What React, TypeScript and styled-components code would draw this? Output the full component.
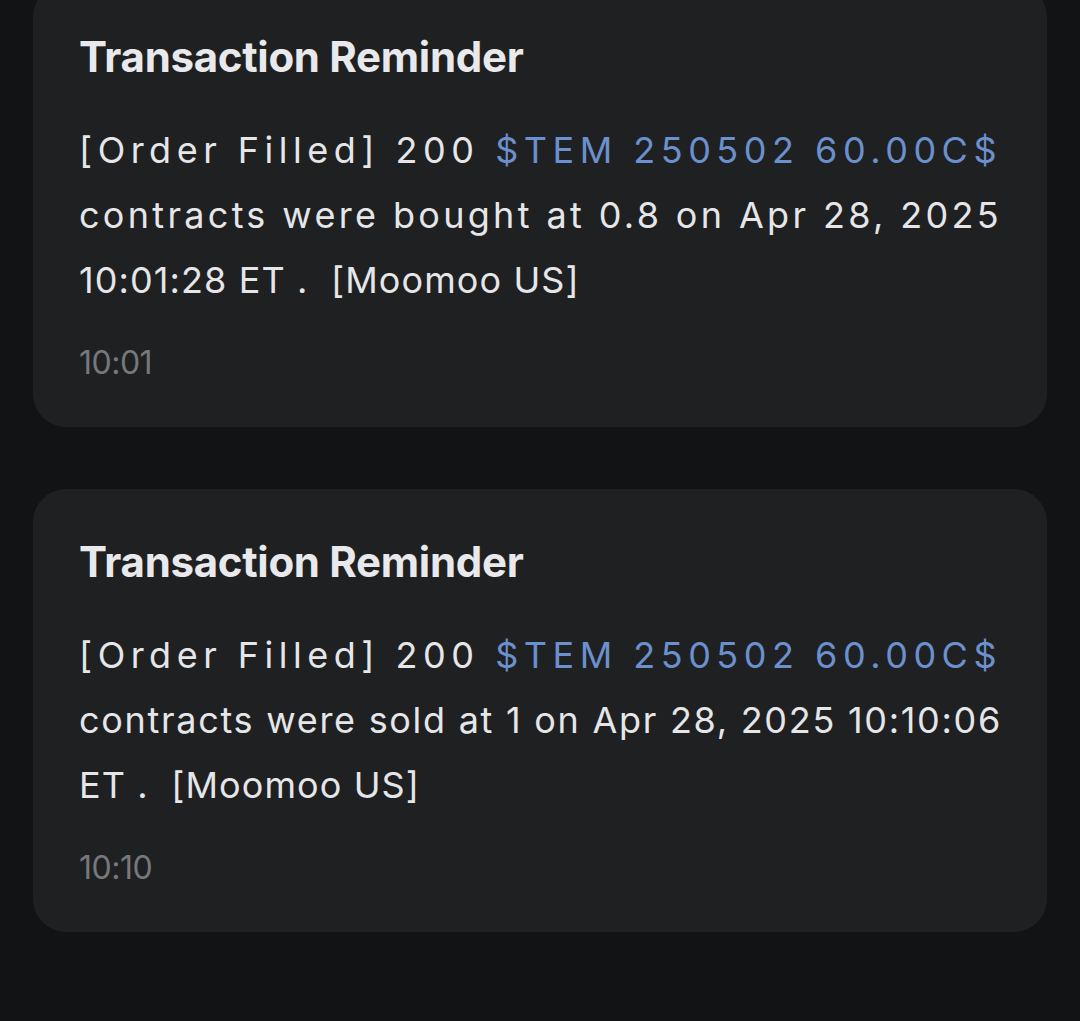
import * as React from 'react'
import styled, { createGlobalStyle } from 'styled-components'

const GlobalStyle = createGlobalStyle`
    html, body {
        margin: 0;
        padding: 0;
        background: #121315;
    }
    body {
        font-family: Inter, "Noto Sans", "Liberation Sans", sans-serif;
        -webkit-font-smoothing: antialiased;
    }
`

const Page = styled.div`
    min-height: 1021px;
    overflow: hidden;
    background: #121315;
`

// list is scrolled a little, so the first card starts above the fold
const List = styled.div`
    display: flex;
    flex-direction: column;
    gap: 62px;
    margin-top: -16px;
    padding: 0 33px;
`

const Card = styled.div`
    background: #1f2022;
    border-radius: 33px;
    padding: 49px 46px 44px 46px;
    height: 443px;
    box-sizing: border-box;
    display: flex;
    flex-direction: column;
`

const Title = styled.div`
    color: #e9e9eb;
    font-size: 42px;
    font-weight: 700;
    line-height: 48px;
    letter-spacing: -0.3px;
`

const Body = styled.div`
    margin-top: 37px;
    color: #e6e6e8;
    font-size: 36px;
    line-height: 65px;
    width: 923px;
`

// full lines run to the right edge, the last one stays ragged
const Line = styled.div<{ spread?: number; full?: boolean }>`
    white-space: pre;
    letter-spacing: ${({ spread }) => (spread ? `${spread}px` : '1.1px')};
    text-align: ${({ full }) => (full ? 'justify' : 'left')};
    text-align-last: ${({ full }) => (full ? 'justify' : 'left')};
`

const Ticker = styled.span`
    color: #6b90cd;
`

const Time = styled.div`
    margin-top: 30px;
    color: #77787b;
    font-size: 32px;
    line-height: 40px;
    letter-spacing: -0.5px;
`

interface Reminder {
    middle: string
    middleSpread: number
    last: string
    time: string
}

const reminders: Reminder[] = [
    {
        middle: 'contracts were bought at 0.8 on Apr 28, 2025',
        middleSpread: 3.3,
        last: '10:01:28 ET .  [Moomoo US]',
        time: '10:01',
    },
    {
        middle: 'contracts were sold at 1 on Apr 28, 2025 10:10:06',
        middleSpread: 1.7,
        last: 'ET .  [Moomoo US]',
        time: '10:10',
    },
]

const ReminderCard: React.FC<{ item: Reminder }> = ({ item }) => (
    <Card>
        <Title>Transaction Reminder</Title>
        <Body>
            <Line spread={5.5} full>
                [Order Filled] 200 <Ticker>$TEM 250502 60.00C$</Ticker>
            </Line>
            <Line spread={item.middleSpread} full>
                {item.middle}
            </Line>
            <Line>{item.last}</Line>
        </Body>
        <Time>{item.time}</Time>
    </Card>
)

const App: React.FC = () => (
    <Page>
        <GlobalStyle />
        <List>
            {reminders.map((r) => (
                <ReminderCard key={r.time} item={r} />
            ))}
        </List>
    </Page>
)

export default App
